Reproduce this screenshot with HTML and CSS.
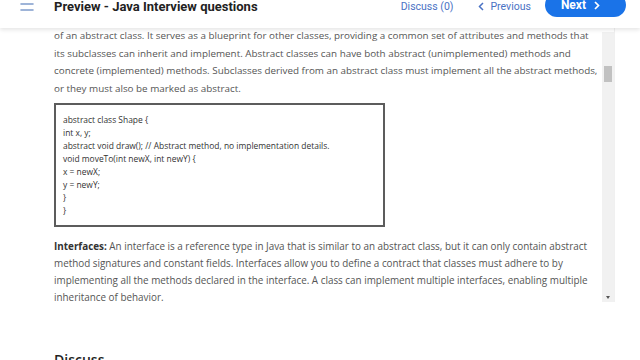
FILE: index.html
```html
<html lang="en">
<head>
  <meta charset="UTF-8">
  <meta name="viewport" content="width=device-width, initial-scale=1.0">
  <title>Preview - Java Interview questions</title>
  <link rel="stylesheet" href="styles.css">
</head>
<body>
  <header class="topbar">
    <div class="topbar-row">
      <button class="menu-btn" aria-label="Menu">
        <svg width="14" height="14" viewBox="0 0 14 14">
          <path d="M1 1h12M1 7h12M1 13h12" stroke="#7f9ccc" stroke-width="1.6" stroke-linecap="round" fill="none"/>
        </svg>
      </button>
      <h1 class="title">Preview - Java Interview questions</h1>
      <nav class="nav">
        <a class="nav-link" href="#">Discuss (0)</a>
        <a class="nav-link prev" href="#">
          <svg width="6" height="9" viewBox="0 0 6 9"><path d="M5 1L1.5 4.5L5 8" stroke="#4a72c4" stroke-width="1.5" fill="none"/></svg>
          Previous
        </a>
        <a class="next-btn" href="#">
          Next
          <svg width="6" height="9" viewBox="0 0 6 9"><path d="M1 1l3.5 3.5L1 8" stroke="#fff" stroke-width="1.7" fill="none"/></svg>
        </a>
      </nav>
    </div>
  </header>

  <main class="page">
    <div class="reader">
      <div class="reader-body">
        <p class="lead">of an abstract class. It serves as a blueprint for other classes, providing a common set of attributes and methods that its subclasses can inherit and implement. Abstract classes can have both abstract (unimplemented) methods and concrete (implemented) methods. Subclasses derived from an abstract class must implement all the abstract methods, or they must also be marked as abstract.</p>
        <div class="code-box">
          <div>abstract class Shape {</div>
          <div>int x, y;</div>
          <div>abstract void draw(); // Abstract method, no implementation details.</div>
          <div>void moveTo(int newX, int newY) {</div>
          <div>x = newX;</div>
          <div>y = newY;</div>
          <div>}</div>
          <div>}</div>
        </div>
        <p class="section"><strong>Interfaces:</strong> An interface is a reference type in Java that is similar to an abstract class, but it can only contain abstract method signatures and constant fields. Interfaces allow you to define a contract that classes must adhere to by implementing all the methods declared in the interface. A class can implement multiple interfaces, enabling multiple inheritance of behavior.</p>
      </div>
      <div class="scrollbar">
        <div class="thumb"></div>
        <div class="arrow-down"></div>
      </div>
    </div>
    <h2 class="discuss-title">Discuss</h2>
  </main>
</body>
</html>
```

FILE: styles.css
```css
body {
  margin: 0;
  background-color: #fff;
  font-family: "Open Sans", sans-serif;
  color: #555;
  overflow: hidden;
}

.topbar {
  position: relative;
  z-index: 2;
  display: flex;
  align-items: flex-start;
  height: 28px;
  background-color: #fff;
  box-shadow: 0 2px 4px rgba(0, 0, 0, 0.1);
}

.topbar-row {
  display: flex;
  align-items: center;
  flex: 1;
  height: 24px;
  margin-top: -7px;
  padding-left: 20px;
}

.menu-btn {
  border: none;
  background: none;
  padding: 0;
  width: 14px;
  height: 14px;
  margin-right: 20px;
  margin-top: -2px;
}

.menu-btn svg {
  display: block;
}

.title {
  margin: 0;
  font-family: Roboto, sans-serif;
  font-size: 13px;
  font-weight: bold;
  color: #222;
  margin-top: 3px;
}

.nav {
  display: flex;
  align-items: center;
  margin-left: auto;
  margin-right: 14px;
}

.nav-link {
  font-family: Roboto, sans-serif;
  font-size: 10.5px;
  color: #4a72c4;
  text-decoration: none;
  margin-right: 25px;
  margin-top: 3px;
}

.prev {
  display: flex;
  align-items: center;
  gap: 6px;
  margin-right: 14px;
}

.next-btn {
  display: flex;
  align-items: center;
  gap: 8px;
  height: 24px;
  padding: 0 26px 0 16px;
  border-radius: 12px;
  background-color: #1a73e8;
  color: #fff;
  font-family: Roboto, sans-serif;
  font-size: 12px;
  font-weight: bold;
  text-decoration: none;
}

.page {
  padding-left: 40px;
  width: 575px;
}

.reader {
  display: flex;
  height: 274px;
  overflow: hidden;
  border-right: 1px solid #f0f0f0;
}

.reader-body {
  flex: 1;
  padding: 0 2px 0 14px;
  margin-top: -1px;
}

.reader-body p {
  margin: 0;
}

.lead {
  font-size: 9.85px;
  line-height: 17.6px;
}

.section {
  font-size: 9.9px;
  line-height: 17px;
  margin-top: 11px !important;
}

.reader-body strong {
  color: #333;
}

.code-box {
  width: 313px;
  margin-top: 6px;
  padding: 8px 7px;
  border: 2px solid #5c5c5c;
  font-size: 8.45px;
  line-height: 13px;
  color: #333;
}

.scrollbar {
  display: flex;
  flex-direction: column;
  align-items: center;
  width: 12px;
  background-color: #f1f1f1;
  margin-top: 4px;
}

.thumb {
  width: 8px;
  height: 16px;
  margin-top: 34px;
  background-color: #c1c1c1;
}

.arrow-down {
  margin-top: auto;
  margin-bottom: 3px;
  width: 0;
  height: 0;
  border-left: 2.5px solid transparent;
  border-right: 2.5px solid transparent;
  border-top: 3px solid #555;
}

.discuss-title {
  margin: 48px 0 0 14px;
  font-family: "Open Sans", sans-serif;
  font-size: 14px;
  font-weight: 600;
  color: #222;
}
```
